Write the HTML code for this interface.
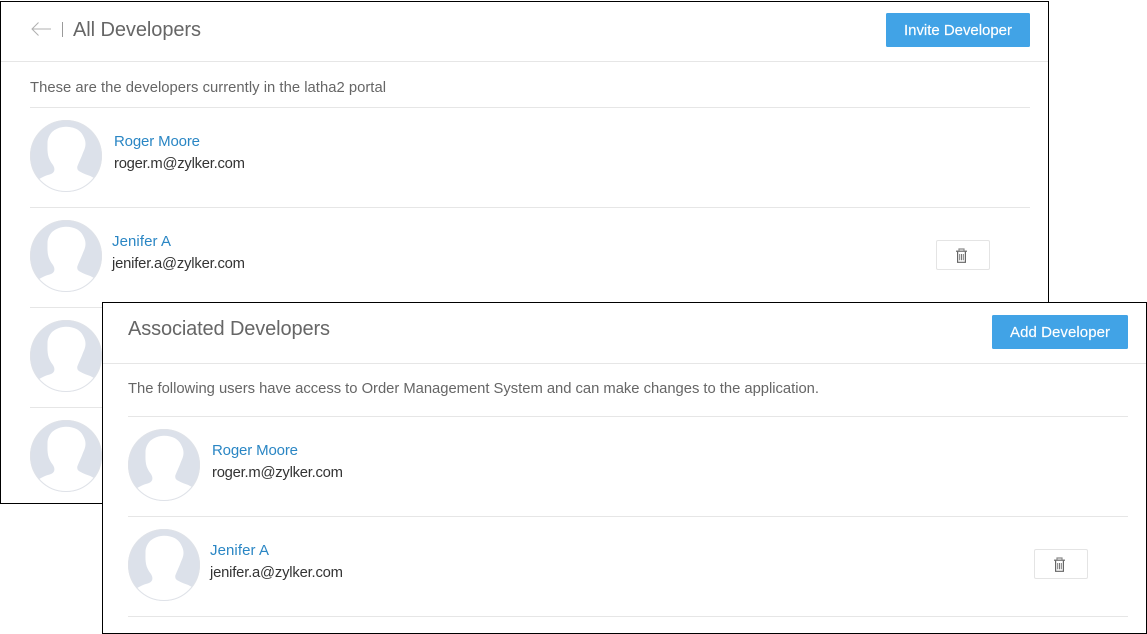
<!DOCTYPE html>
<html><head><meta charset="utf-8"><title>Developers</title>
<style>
html,body{margin:0;padding:0;background:#fff;width:1147px;height:634px;overflow:hidden}
svg{display:block}
text{font-family:"Liberation Sans",sans-serif}
.t{font-size:20px;fill:#666}
.d{font-size:14.8px;fill:#666}
.n{font-size:15px;fill:#2a86c4}
.e{font-size:14.8px;fill:#333}
.b{font-size:15px;fill:#fff;stroke:#fff;stroke-width:.15}
.l{stroke:#e6e6e6;stroke-width:1}
</style></head><body>
<svg width="1147" height="634" viewBox="0 0 1147 634" xmlns="http://www.w3.org/2000/svg">
<defs>
<clipPath id="c"><circle cx="36" cy="36" r="36"/></clipPath>
<g id="av">
<circle cx="36" cy="36" r="36" fill="#dce1ea"/>
<path clip-path="url(#c)" fill="#fff" d="M36 6.700C31 6.700 26 8.500 22 12C18.800 15.500 17.500 19.500 17.500 23C17.500 26.500 17.300 29.500 17.700 32.700C18 36 19 38.500 20.300 41C21.500 43.500 23.500 45 24.200 47.700C24.700 50 24.200 51.500 23 52.700C21.500 54 19.500 54.500 17 55.300C14.500 56.200 11.500 57.500 8.500 59.500L4 62L4 74L68 74L70 62L66 59.300C64 58 62 57 60.300 56C57.500 55 54.500 54 52 52.700C50 51.500 47.800 50.800 47.500 49.300C47.200 48 47 47 47.500 46C49 42 51.500 37 53 32.700C54.500 29.500 55.500 27 55.500 24C55.500 20.500 54.300 18 53 15.500C51.500 12.800 49.500 10.800 47 9.300C43.500 7.500 40 6.700 36 6.700Z"/>
<circle cx="36" cy="36" r="35.500" fill="none" stroke="#dfe2e8" stroke-width="1"/>
</g>
<g id="tr" fill="none" stroke="#666" stroke-width="1.200">
<path d="M0 3.200H11"/>
<path d="M3 3V1H8V3" stroke="#8a8a8a"/>
<path d="M1.600 3.600V14.300H9.400V3.600"/>
<path d="M3.700 6V12.200M5.500 6V12.200M7.300 6V12.200" stroke="#777" stroke-width="1"/>
</g>
</defs>

<!-- panel 1 -->
<rect x="0.500" y="1.500" width="1048" height="502" fill="#fff" stroke="#000"/>
<path d="M51 29H32M38.500 22.500L32 29L38.500 35.500" fill="none" stroke="#b0b0b0" stroke-width="1"/>
<path d="M62.500 22V37" stroke="#9a9a9a"/>
<text class="t" x="73" y="36" textLength="128" lengthAdjust="spacing">All Developers</text>
<rect x="886" y="13" width="144" height="34" rx="1.500" fill="#41a3e6"/>
<text class="b" x="904" y="35" textLength="108" lengthAdjust="spacing">Invite Developer</text>
<path class="l" d="M1 61.500H1048"/>
<text class="d" x="30" y="92" textLength="356" lengthAdjust="spacing">These are the developers currently in the latha2 portal</text>
<path class="l" d="M30 107.500H1030M30 207.500H1030M30 307.500H1030M30 407.500H1030"/>
<use href="#av" x="30" y="120"/>
<text class="n" x="114" y="146" textLength="86" lengthAdjust="spacing">Roger Moore</text>
<text class="e" x="114" y="168" textLength="131" lengthAdjust="spacing">roger.m@zylker.com</text>
<use href="#av" x="30" y="220"/>
<text class="n" x="112" y="246" textLength="59" lengthAdjust="spacing">Jenifer A</text>
<text class="e" x="112" y="268" textLength="133" lengthAdjust="spacing">jenifer.a@zylker.com</text>
<rect x="936.500" y="240.500" width="53" height="29" rx="1.500" fill="#fff" stroke="#e4e4e4"/>
<use href="#tr" x="956" y="248"/>
<use href="#av" x="30" y="320"/>
<use href="#av" x="30" y="420"/>

<!-- panel 2 -->
<rect x="102.500" y="302.500" width="1044" height="331" fill="#fff" stroke="#000"/>
<text class="t" x="128" y="335" textLength="202" lengthAdjust="spacing">Associated Developers</text>
<rect x="992" y="315" width="136" height="34" rx="1.500" fill="#41a3e6"/>
<text class="b" x="1010" y="337" textLength="100" lengthAdjust="spacing">Add Developer</text>
<path class="l" d="M103 363.500H1146"/>
<text class="d" x="128" y="393" textLength="691" lengthAdjust="spacing">The following users have access to Order Management System and can make changes to the application.</text>
<path class="l" d="M128 416.500H1128M128 516.500H1128M128 616.500H1128"/>
<use href="#av" x="128" y="429"/>
<text class="n" x="212" y="455" textLength="86" lengthAdjust="spacing">Roger Moore</text>
<text class="e" x="212" y="477" textLength="131" lengthAdjust="spacing">roger.m@zylker.com</text>
<use href="#av" x="128" y="529"/>
<text class="n" x="210" y="555" textLength="59" lengthAdjust="spacing">Jenifer A</text>
<text class="e" x="210" y="577" textLength="133" lengthAdjust="spacing">jenifer.a@zylker.com</text>
<rect x="1034.500" y="549.500" width="53" height="29" rx="1.500" fill="#fff" stroke="#e4e4e4"/>
<use href="#tr" x="1054" y="557"/>
</svg>
</body></html>
